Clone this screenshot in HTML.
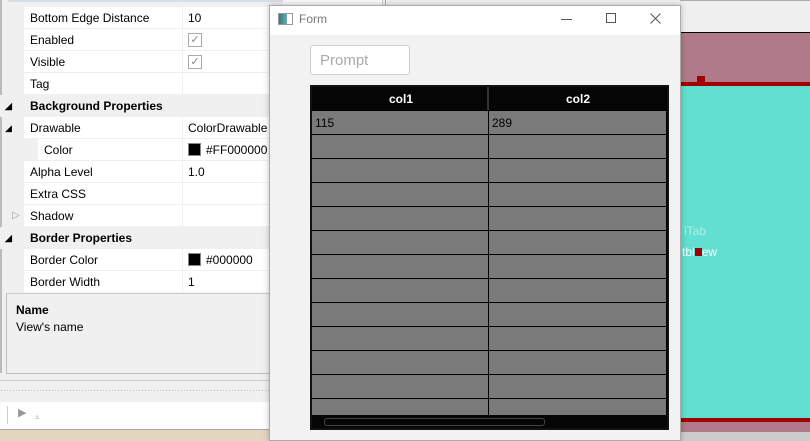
<!DOCTYPE html>
<html><head><style>
*{margin:0;padding:0;box-sizing:border-box}
body{width:810px;height:441px;overflow:hidden;position:relative;background:#f0f0f0;font-family:"Liberation Sans",sans-serif;font-size:12px;color:#000}
.a{position:absolute}
.row{position:absolute;left:24px;width:260px;height:22px;background:#fff;border-bottom:1px solid #f0f0f0}
.row .k{position:absolute;left:6px;top:4px}
.row .v{position:absolute;left:164px;top:4px}
.row .sep{position:absolute;left:158px;top:0;width:1px;height:22px;background:#f0f0f0}
.cat{position:absolute;left:0;width:284px;height:22px;background:#f0f0f0;font-weight:bold}
.cat .lbl{position:absolute;left:30px;top:4px}
.tri{position:absolute;left:5px;font-size:9px}
.sw{display:inline-block;width:13px;height:13px;background:#000;border:1px solid #888;vertical-align:-2px;margin-right:5px}
.cb{position:absolute;left:164px;top:4px;width:14px;height:14px;border:1px solid #aaa;color:#888;font-size:11px;line-height:12px;text-align:center}
.hl{position:absolute;left:311px;width:357px;height:1px;background:#000}
</style></head><body>
<!-- left panel -->
<div class="a" style="left:8px;top:0;width:276px;height:2px;background:#d8dde6"></div>
<div class="a" style="left:0;top:0;width:2px;height:373px;background:#bbb"></div>
<div class="row" style="top:7px"><span class="k">Bottom Edge Distance</span><div class="sep"></div><span class="v">10</span></div>
<div class="row" style="top:29px"><span class="k">Enabled</span><div class="sep"></div><div class="cb">✓</div></div>
<div class="row" style="top:51px"><span class="k">Visible</span><div class="sep"></div><div class="cb">✓</div></div>
<div class="row" style="top:73px"><span class="k">Tag</span><div class="sep"></div></div>
<div class="cat" style="top:95px"><span class="tri" style="top:6px">◢</span><span class="lbl">Background Properties</span></div>
<div class="a" style="left:5px;top:123px;font-size:9px">◢</div>
<div class="row" style="top:117px"><span class="k">Drawable</span><div class="sep"></div><span class="v">ColorDrawable</span></div>
<div class="row" style="top:139px;left:38px;width:246px"><span class="k">Color</span><div class="sep" style="left:144px"></div><span class="v" style="left:150px"><i class="sw"></i>#FF000000</span></div>
<div class="a" style="left:24px;top:139px;width:14px;height:22px;background:#f0f0f0"></div>
<div class="row" style="top:161px"><span class="k">Alpha Level</span><div class="sep"></div><span class="v">1.0</span></div>
<div class="row" style="top:183px"><span class="k">Extra CSS</span><div class="sep"></div></div>
<div class="row" style="top:205px"><span class="k">Shadow</span><div class="sep"></div></div>
<div class="a" style="left:12px;top:210px;color:#999;font-size:10px">▷</div>
<div class="cat" style="top:227px"><span class="tri" style="top:6px">◢</span><span class="lbl">Border Properties</span></div>
<div class="row" style="top:249px"><span class="k">Border Color</span><div class="sep"></div><span class="v"><i class="sw"></i>#000000</span></div>
<div class="row" style="top:271px"><span class="k">Border Width</span><div class="sep"></div><span class="v">1</span></div>
<div class="a" style="left:6px;top:293px;width:280px;height:1px;background:#ccc"></div>
<div class="a" style="left:16px;top:303px;font-weight:bold">Name</div>
<div class="a" style="left:16px;top:320px">View's name</div>
<div class="a" style="left:6px;top:294px;width:1px;height:80px;background:#bbb"></div>
<div class="a" style="left:6px;top:373px;width:280px;height:1px;background:#bbb"></div>
<div class="a" style="left:0;top:380px;width:280px;height:1px;background:#ccc"></div>
<div class="a" style="left:0;top:389px;width:280px;height:4px;background-image:radial-gradient(#bbb 0.6px,transparent 0.8px);background-size:3px 3px"></div>
<div class="a" style="left:0;top:402px;width:280px;height:28px;background:#fff"></div>
<div class="a" style="left:7px;top:406px;width:1px;height:18px;background:#ccc"></div>
<div class="a" style="left:18px;top:406px;color:#999;font-size:11px">▶</div>
<div class="a" style="left:35px;top:413px;color:#999;font-size:8px">⩡</div>
<div class="a" style="left:0;top:429px;width:280px;height:12px;background:#e3d5c0;border-top:1px solid #aaa"></div>
<div class="a" style="left:283px;top:0;width:100px;height:8px;background:#f8f8f8;border-right:1px solid #ccc"></div>
<div class="a" style="left:385px;top:0;width:1px;height:10px;background:#aaa"></div>
<!-- right designer -->
<div class="a" style="left:680px;top:0;width:130px;height:32px;background:#f0f0f0;border-top:1px solid #aaa"></div>
<div class="a" style="left:680px;top:32px;width:130px;height:1px;background:#000"></div>
<div class="a" style="left:680px;top:33px;width:130px;height:49px;background:#b07b88"></div>
<div class="a" style="left:680px;top:82px;width:130px;height:4px;background:#a00000"></div>
<div class="a" style="left:697px;top:76px;width:8px;height:8px;background:#a00000"></div>
<div class="a" style="left:680px;top:86px;width:130px;height:332px;background:#62dfd0"></div>
<div class="a" style="left:684px;top:224px;color:#a8f0e8">lTab</div>
<div class="a" style="left:682px;top:245px;color:#fff">tbl<span style="display:inline-block;width:7px;height:8px;background:#a00000"></span>ew</div>
<div class="a" style="left:680px;top:418px;width:130px;height:4px;background:#a00000"></div>
<div class="a" style="left:697px;top:419px;width:8px;height:9px;background:#a00000"></div>
<div class="a" style="left:680px;top:422px;width:130px;height:10px;background:#b07b88"></div>
<div class="a" style="left:680px;top:432px;width:130px;height:9px;background:#ccc"></div>
<!-- form window -->
<div class="a" style="left:269px;top:5px;width:412px;height:436px;background:#f2f2f2;border:1px solid #aaa;box-shadow:0 0 6px rgba(0,0,0,.25)"></div>
<div class="a" style="left:270px;top:6px;width:410px;height:29px;background:#fff"></div>
<div class="a" style="left:278px;top:13px;width:15px;height:12px;border:1px solid #999;background:linear-gradient(90deg,#3a7a70 0,#6ab 60%,#fff 60%)"></div>
<div class="a" style="left:299px;top:12px;color:#777;font-size:12px">Form</div>
<div class="a" style="left:561px;top:19px;width:11px;height:1px;background:#555"></div>
<div class="a" style="left:606px;top:13px;width:10px;height:10px;border:1px solid #555"></div>
<svg class="a" style="left:650px;top:13px" width="11" height="11"><path d="M0.5 0.5L10.5 10.5M10.5 0.5L0.5 10.5" stroke="#555" stroke-width="1"/></svg>
<div class="a" style="left:310px;top:45px;width:100px;height:30px;background:#fff;border:1px solid #ccc;border-radius:3px"></div>
<div class="a" style="left:320px;top:52px;color:#aaa;font-size:15px">Prompt</div>
<div class="a" style="left:310px;top:85px;width:359px;height:345px;background:#7a7a7a;border:2px solid #111"></div>
<div class="a" style="left:312px;top:87px;width:355px;height:23px;background:#050505"></div>
<div class="a" style="left:389px;top:92px;color:#fff;font-weight:bold">col1</div>
<div class="a" style="left:566px;top:92px;color:#fff;font-weight:bold">col2</div>
<div class="a" style="left:488px;top:87px;width:1px;height:328px;background:#000"></div>
<div class="a" style="left:487px;top:87px;width:2px;height:23px;background:#333"></div>
<div class="a" style="left:666px;top:87px;width:1px;height:328px;background:#000"></div>
<div class="hl" style="top:110px"></div><div class="hl" style="top:134px"></div><div class="hl" style="top:158px"></div><div class="hl" style="top:182px"></div><div class="hl" style="top:206px"></div><div class="hl" style="top:230px"></div><div class="hl" style="top:254px"></div><div class="hl" style="top:278px"></div><div class="hl" style="top:302px"></div><div class="hl" style="top:326px"></div><div class="hl" style="top:350px"></div><div class="hl" style="top:374px"></div><div class="hl" style="top:398px"></div>
<div class="a" style="left:315px;top:116px">115</div>
<div class="a" style="left:492px;top:116px">289</div>
<div class="a" style="left:312px;top:415px;width:355px;height:13px;background:#050505"></div>
<div class="a" style="left:324px;top:418px;width:221px;height:8px;border:1px solid #444;border-radius:3px"></div>
</body></html>
